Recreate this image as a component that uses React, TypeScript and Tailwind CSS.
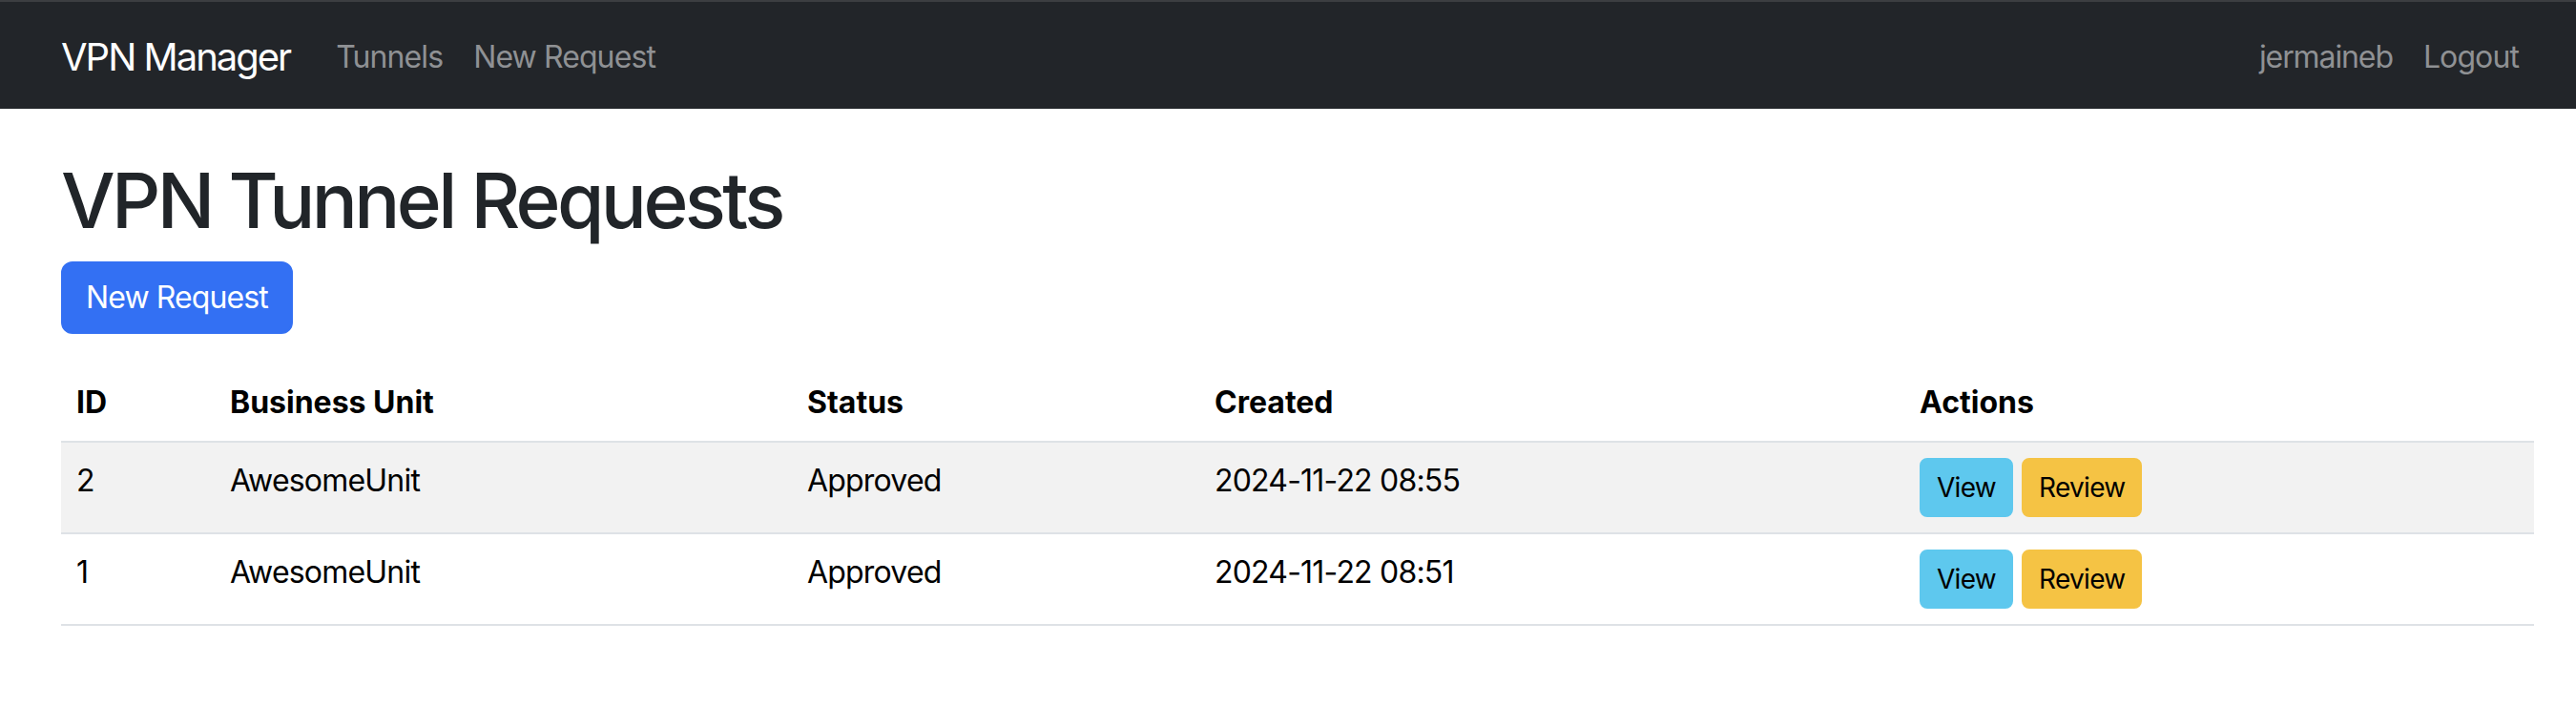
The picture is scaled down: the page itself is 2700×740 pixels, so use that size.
import React from "react";

const rows = [
  { id: "2", unit: "AwesomeUnit", status: "Approved", created: "2024-11-22 08:55", striped: true },
  { id: "1", unit: "AwesomeUnit", status: "Approved", created: "2024-11-22 08:51", striped: false },
];

export default function App() {
  return (
    <div className="min-h-[740px] w-[2700px] bg-white font-['Inter','Liberation_Sans',sans-serif]">
      <div className="h-[2px] bg-[#3c3e41]" />
      <nav className="h-[112px] bg-[#222529]">
        <div className="ml-[64px] flex h-full w-[2592px] items-center justify-between pt-[3px]">
          <div className="flex items-center">
            <a className="mr-[32px] text-[40px] leading-[60px] tracking-[-2px] text-white">VPN Manager</a>
            <a className="px-[16px] text-[32px] leading-[48px] tracking-[-0.9px] text-[#8f9194]">Tunnels</a>
            <a className="px-[16px] text-[32px] leading-[48px] tracking-[-0.9px] text-[#8f9194]">New Request</a>
          </div>
          <div className="flex items-center">
            <span className="px-[16px] text-[32px] leading-[48px] tracking-[-1.1px] text-[#8f9194]">jermaineb</span>
            <a className="px-[16px] text-[32px] leading-[48px] tracking-[-0.9px] text-[#8f9194]">Logout</a>
          </div>
        </div>
      </nav>
      <main className="ml-[64px] mt-[48px] w-[2592px]">
        <h1 className="mb-[16px] text-[80px] font-medium leading-[96px] tracking-[-3.6px] text-[#212529]">
          VPN Tunnel Requests
        </h1>
        <button className="h-[76px] rounded-[12px] border-2 border-[#3370f3] bg-[#3370f3] px-[24px] text-[32px] leading-[48px] tracking-[-0.9px] text-white">
          New Request
        </button>
        <table className="mt-[32px] w-full table-fixed border-collapse text-left text-[32px] leading-[48px] text-black">
          <thead>
            <tr className="border-b-2 border-[#dee2e6]">
              <th className="w-[161px] px-[16px] py-[16px] align-bottom font-bold">ID</th>
              <th className="w-[605px] px-[16px] py-[16px] align-bottom font-bold">Business Unit</th>
              <th className="w-[427px] px-[16px] py-[16px] align-bottom font-bold">Status</th>
              <th className="w-[739px] px-[16px] py-[16px] align-bottom font-bold">Created</th>
              <th className="px-[16px] py-[16px] align-bottom font-bold">Actions</th>
            </tr>
          </thead>
          <tbody className="tracking-[-0.8px]">
            {rows.map((r) => (
              <tr key={r.id} className={`border-b-2 border-[#dee2e6] ${r.striped ? "bg-[#f2f2f2]" : "bg-white"}`}>
                <td className="px-[16px] py-[16px] align-top">{r.id}</td>
                <td className="px-[16px] py-[16px] align-top">{r.unit}</td>
                <td className="px-[16px] py-[16px] align-top">{r.status}</td>
                <td className="px-[16px] py-[16px] align-top">{r.created}</td>
                <td className="px-[16px] py-[16px] align-top">
                  <div className="flex items-center gap-[9px]">
                    <button className="h-[62px] rounded-[8px] border-2 border-[#5ec8ee] bg-[#5ec8ee] px-[16px] text-[28px] leading-[42px] tracking-[-0.7px] text-black">
                      View
                    </button>
                    <button className="h-[62px] rounded-[8px] border-2 border-[#f5c344] bg-[#f5c344] px-[16px] text-[28px] leading-[42px] tracking-[-0.7px] text-black">
                      Review
                    </button>
                  </div>
                </td>
              </tr>
            ))}
          </tbody>
        </table>
      </main>
    </div>
  );
}
